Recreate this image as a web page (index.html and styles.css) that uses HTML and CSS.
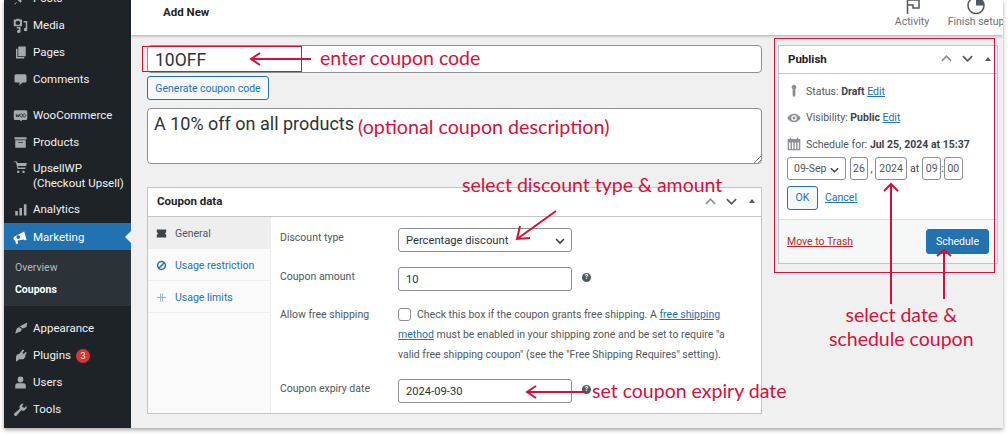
FILE: index.html
```html
<!DOCTYPE html>
<html lang="en">
<head>
<meta charset="utf-8">
<title>Add New Coupon</title>
<link rel="stylesheet" href="styles.css">
</head>
<body>
<div class="frame">
  <nav class="sidebar">
    <ul class="menu">
      <li class="item"><svg class="ic" viewBox="0 0 20 20"><path d="M12 2l6 6-2 1-2-1-3 3 .5 3L10 15.500 7 12.500 3 18l-1 0 0-1 5.500-4L4.500 10 6 8.500l3 .5 3-3-1-2z"/></svg><span>Posts</span></li>
      <li class="item"><svg class="ic" viewBox="0 0 20 20"><path d="M1 2h3l1-1h3l1 1h3v9H1zM6.500 3.500a3 3 0 1 0 .01 0zM14 4h5v11a2.300 2.300 0 1 1-2-2V6h-3zM5 12h5v5.500a2.300 2.300 0 1 1-2-2V14H5z" fill-rule="evenodd"/></svg><span>Media</span></li>
      <li class="item"><svg class="ic" viewBox="0 0 20 20"><path d="M7 2h10v13H7zM4 5h2v11h9v2H4z"/></svg><span>Pages</span></li>
      <li class="item"><svg class="ic" viewBox="0 0 20 20"><path d="M4 3h12a2 2 0 0 1 2 2v7a2 2 0 0 1-2 2h-3l-5 4 1-4H4a2 2 0 0 1-2-2V5a2 2 0 0 1 2-2z"/></svg><span>Comments</span></li>
      <li class="item gap"><svg class="ic" viewBox="0 0 20 20"><path d="M3 3h14a2 2 0 0 1 2 2v9a2 2 0 0 1-2 2h-5l-1 2-2-2H3a2 2 0 0 1-2-2V5a2 2 0 0 1 2-2z"/><path class="cut" d="M4 8l1 4 1.200-3 1.200 3 1-4M11 8a2 2 0 1 0 .01 0zM15 8a2 2 0 1 0 .01 0z"/></svg><span>WooCommerce</span></li>
      <li class="item"><svg class="ic" viewBox="0 0 20 20"><path d="M2 3h16v3H2zM3 7h14v10H3z"/><path class="cut" d="M7 10h6"/></svg><span>Products</span></li>
      <li class="item tall"><svg class="ic" viewBox="0 0 20 20"><path d="M1 3h3l2 9h10l1-2H7l-.5-2h11l1-4H6L5.500 2H1zM7 14a1.700 1.700 0 1 0 .01 0zM14 14a1.700 1.700 0 1 0 .01 0z"/></svg><span>UpsellWP<br>(Checkout Upsell)</span></li>
      <li class="item"><svg class="ic" viewBox="0 0 20 20"><path d="M3 12h3.500v6H3zM8.500 8H12v10H8.500zM14.500 3H18v15h-3.500z"/></svg><span>Analytics</span></li>
      <li class="item current"><svg class="ic" viewBox="0 0 20 20"><path d="M15 2l3 11-2 1-1.500-1.500L6 14l1 4-3 .5L3 14a3 3 0 0 1-1-5.500z"/><path class="cutb" d="M7 7a2.500 2.500 0 1 0 .01 0z"/></svg><span>Marketing</span></li>
      <li class="submenu">
        <a class="sub">Overview</a>
        <a class="sub on">Coupons</a>
      </li>
      <li class="item gap2"><svg class="ic" viewBox="0 0 20 20"><path d="M19 2l-1 6-5 2-4-3zM8 8l4 3-2 3-3 1-4 2 1-4 1-3z"/></svg><span>Appearance</span></li>
      <li class="item"><svg class="ic" viewBox="0 0 20 20"><path d="M13 2l2 1-2.500 3.500 2 1.500 2.500-3 1.500 1.500-2.500 3.500 1 1-3 4H8l-3 3-1-1V12l1-3 3-1 1-1z"/></svg><span>Plugins</span><b class="badge">3</b></li>
      <li class="item"><svg class="ic" viewBox="0 0 20 20"><path d="M10 2a3.800 3.800 0 0 1 3.800 4A3.800 3.800 0 0 1 10 10a3.800 3.800 0 0 1-3.800-4A3.800 3.800 0 0 1 10 2zM6 11h8a3 3 0 0 1 3 3v4H3v-4a3 3 0 0 1 3-3z"/></svg><span>Users</span></li>
      <li class="item"><svg class="ic" viewBox="0 0 20 20"><path d="M18 5l-3 3-3-2 2-4a5 5 0 0 0-5 7L2 15a2 2 0 1 0 3 3l6-7a5 5 0 0 0 7-6z"/></svg><span>Tools</span></li>
    </ul>
  </nav>

  <div class="main">
    <header class="topbar">
      <h1 class="page-title">Add New</h1>
      <div class="top-actions">
        <div class="action"><svg class="top-ic" viewBox="0 0 20 14"><path d="M5.500 14V-2M5.500 0H17v8h-6V5H5.500" fill="none" stroke="#50575e" stroke-width="1.500"/></svg><span>Activity</span></div>
        <div class="action"><svg class="top-ic" viewBox="0 0 20 14"><circle cx="10" cy="5.500" r="8" fill="none" stroke="#50575e" stroke-width="1.500"/><path d="M10 5.500V-2.500a8 8 0 0 1 8 8z" fill="#50575e"/></svg><span>Finish setup</span></div>
      </div>
    </header>

    <div class="content">
      <section class="left-col">
        <div class="code-input">10OFF</div>
        <button class="gen">Generate coupon code</button>
        <div class="desc">A 10% off on all products
          <svg class="grip" viewBox="0 0 8 8"><path d="M8 1L1 8M8 5L5 8" stroke="#777" fill="none"/></svg>
        </div>

        <div class="box coupon-box">
          <div class="box-head">
            <h2>Coupon data</h2>
            <div class="handles">
              <svg viewBox="0 0 12 7" class="chev dim"><path d="M1 6l5-5 5 5"/></svg>
              <svg viewBox="0 0 12 7" class="chev"><path d="M1 1l5 5 5-5"/></svg>
              <i class="tri"></i>
            </div>
          </div>
          <div class="box-body">
            <ul class="tabs">
              <li class="tab active"><svg class="tab-ic" viewBox="0 0 14 12"><path d="M1 1h12v3l-1.500 2L13 8v3H1V8l1.500-2L1 4z" fill="#3c434a"/></svg>General</li>
              <li class="tab"><svg class="tab-ic" viewBox="0 0 14 14"><circle cx="7" cy="7" r="5" fill="none" stroke="#2271b1" stroke-width="2"/><path d="M3.500 10.500l7-7" stroke="#2271b1" stroke-width="2"/></svg>Usage restriction</li>
              <li class="tab"><svg class="tab-ic" viewBox="0 0 14 14"><path d="M1 7h12M5.800 2v10M8.200 2v10" stroke="#7ba7cc" fill="none"/></svg>Usage limits</li>
            </ul>
            <div class="panel">
              <div class="row"><label>Discount type</label><div class="field select">Percentage discount<svg class="caret" viewBox="0 0 12 8"><path d="M2 2l4 4 4-4"/></svg></div></div>
              <div class="row"><label>Coupon amount</label><div class="field">10</div><i class="help">?</i></div>
              <div class="row ship"><label>Allow free shipping</label>
                <p class="ship-text"><i class="check"></i>Check this box if the coupon grants free shipping. A <a>free shipping method</a> must be enabled in your shipping zone and be set to require "a valid free shipping coupon" (see the "Free Shipping Requires" setting).</p>
              </div>
              <div class="row"><label>Coupon expiry date</label><div class="field">2024-09-30</div><i class="help">?</i></div>
            </div>
          </div>
        </div>
      </section>

      <aside class="right-col">
        <div class="box publish">
          <div class="box-head pub-head">
            <h2>Publish</h2>
            <div class="handles">
              <svg viewBox="0 0 12 7" class="chev dim"><path d="M1 6l5-5 5 5"/></svg>
              <svg viewBox="0 0 12 7" class="chev"><path d="M1 1l5 5 5-5"/></svg>
              <i class="tri"></i>
            </div>
          </div>
          <div class="pub-body">
            <div class="pub-line"><svg class="pub-ic" viewBox="0 0 20 20"><path d="M10 1a3.500 3.500 0 0 1 2 6.300V16l-2 3-2-3V7.300A3.500 3.500 0 0 1 10 1z"/></svg><span>Status: <b>Draft</b> <a>Edit</a></span></div>
            <div class="pub-line"><svg class="pub-ic" viewBox="0 0 20 20"><path d="M10 4c4 0 7.500 2.500 9.500 6-2 3.500-5.500 6-9.500 6S2.500 13.500.5 10C2.500 6.500 6 4 10 4zm0 2a4 4 0 1 0 .01 0zm0 2a2 2 0 1 1-.01 0z" fill-rule="evenodd"/></svg><span>Visibility: <b>Public</b> <a>Edit</a></span></div>
            <div class="pub-line"><svg class="pub-ic" viewBox="0 0 20 20"><path d="M1 3h3V1h2v2h8V1h2v2h3v16H1zm2 5v9h2V8zm4 0v9h2V8zm4 0v9h2V8zm4 0v9h2V8z" fill-rule="evenodd"/></svg><span>Schedule for: <b>Jul 25, 2024 at 15:37</b></span></div>
            <div class="date-row">
              <div class="df month">09-Sep<svg class="caret" viewBox="0 0 12 8"><path d="M2 2l4 4 4-4"/></svg></div>
              <div class="df day">26</div><span class="sep-comma">,</span>
              <div class="df year">2024</div><span class="sep-at">at</span>
              <div class="df hh">09</div><span class="sep-colon">:</span>
              <div class="df hh">00</div>
            </div>
            <div class="ok-row"><button class="ok">OK</button><a>Cancel</a></div>
          </div>
          <div class="pub-foot"><a class="trash">Move to Trash</a><button class="sched">Schedule</button></div>
        </div>
      </aside>
    </div>
  </div>
</div>

<div class="notes">
  <svg class="note-lines" viewBox="0 0 1008 436">
    <g fill="none" stroke="#d5103c" stroke-width="2">
      <rect class="thin" x="142.500" y="46.500" width="159" height="25"/>
      <rect class="thin" x="774.500" y="38.500" width="220" height="234"/>
      <path d="M311 59H251M260 53l-9 6 9 6"/>
      <path d="M556 211l-39 28M520 226l-3 13 13-1"/>
      <path d="M586 392H527M536 386l-9 6 9 6"/>
      <path d="M891 304V184M884 191l7-7 7 7"/>
      <path d="M944 299V250M937 256l7-6 7 6"/>
    </g>
  </svg>
  <span class="note n-code">enter coupon code</span>
  <span class="note n-desc">(optional coupon description)</span>
  <span class="note n-type">select discount type &amp; amount</span>
  <span class="note n-exp">set coupon expiry date</span>
  <span class="note n-sched">select date &amp;<br>schedule coupon</span>
</div>
</body>
</html>
```

FILE: styles.css
```css
* { box-sizing: border-box; }
html, body { margin: 0; padding: 0; }
body {
  width: 1008px;
  height: 436px;
  overflow: hidden;
  background: #fff;
  position: relative;
  font-family: Roboto, "Noto Sans", sans-serif;
  color: #3c434a;
  font-size: 11px;
}
a { color: #2271b1; text-decoration: underline; }
ul { list-style: none; margin: 0; padding: 0; }
h1, h2, p { margin: 0; }
svg { display: block; }

.frame {
  display: flex;
  width: 999px;
  height: 428px;
  margin-left: 4px;
  box-shadow: 0 2px 4px rgba(0,0,0,.35);
  background: #f0f0f1;
  overflow: hidden;
}

/* sidebar */
.sidebar { width: 127px; flex: none; background: #1d2327; overflow: hidden; }
.menu { margin-top: -15px; }
.item {
  height: 27px;
  display: flex;
  align-items: center;
  color: #f0f0f1;
  font-size: 11.500px;
  line-height: 15px;
  padding-left: 9px;
  gap: 5px;
  position: relative;
}
.ic { width: 15px; height: 15px; flex: none; fill: #a7aaad; }
.cut { fill: none; stroke: #1d2327; stroke-width: 1; }
.cutb { fill: #2271b1; }
.item.gap { margin-top: 9px; }
.item.tall { height: 40px; align-items: flex-start; padding-top: 5px; }
.item.tall .ic { margin-top: -1px; }
.item.current { background: #2271b1; color: #fff; padding-top: 2px; }
.item.current .ic { fill: #fff; }
.item.current::after {
  content: "";
  position: absolute;
  right: 0;
  top: 8px;
  border: 6px solid transparent;
  border-right-color: #f0f0f1;
  border-left: 0;
}
.submenu { background: #2c3338; height: 56px; padding-top: 8px; display: flex; flex-direction: column; }
.sub { display: block; height: 22px; line-height: 20px; padding-left: 11px; color: #b4b9be; font-size: 10.500px; text-decoration: none; }
.sub.on { color: #fff; font-weight: 700; }
.item.gap2 { margin-top: 9px; }
.badge {
  width: 14px; height: 14px; border-radius: 50%;
  background: #d63638; color: #fff;
  font-size: 9px; line-height: 14px; text-align: center; font-weight: 400;
}

/* main */
.main { flex: 1; display: flex; flex-direction: column; min-width: 0; }
.topbar {
  height: 35px;
  flex: none;
  background: #fff;
  box-shadow: 0 1px 3px rgba(0,0,0,.3);
  display: flex;
  justify-content: space-between;
  position: relative;
  padding-left: 32px;
}
.page-title { font-size: 11.500px; font-weight: 700; color: #1d2327; line-height: 24px; }
.top-actions { display: flex; gap: 10px; height: 35px; overflow: hidden; }
.action { display: flex; flex-direction: column; align-items: center; font-size: 10.500px; color: #6b7075; width: 54px; }
.action span { line-height: 13px; margin-top: 1px; white-space: nowrap; }
.top-ic { width: 20px; height: 14px; flex: none; }

.content { flex: 1; display: flex; padding: 10px 5px 0 16px; gap: 16px; min-height: 0; }
.left-col { width: 615px; flex: none; }
.right-col { width: 220px; flex: none; }

.code-input {
  height: 28px;
  background: #fff;
  border: 1px solid #8c8f94;
  border-radius: 4px;
  font-size: 17.500px;
  line-height: 29px;
  padding-left: 7px;
  color: #2c3338;
}
.gen {
  display: block;
  margin-top: 3px;
  height: 24px;
  width: 122px;
  padding: 0;
  border: 1px solid #2271b1;
  border-radius: 3px;
  background: #f6f7f7;
  color: #2271b1;
  font: 10.500px Roboto, sans-serif;
}
.desc {
  position: relative;
  margin-top: 8px;
  height: 56px;
  background: #fff;
  border: 1px solid #8c8f94;
  border-radius: 4px;
  font-size: 18px;
  line-height: 24px;
  padding: 3px 6px;
  color: #2c3338;
}
.grip { position: absolute; right: 0; bottom: 0; width: 8px; height: 8px; }

.box { background: #fff; border: 1px solid #c3c4c7; }
.coupon-box { margin-top: 23px; height: 227px; display: flex; flex-direction: column; }
.box-head {
  height: 29px;
  flex: none;
  border-bottom: 1px solid #c3c4c7;
  display: flex;
  align-items: center;
  justify-content: space-between;
  padding: 0 6px 2px 9px;
}
.box-head h2 { font-size: 11.500px; font-weight: 700; color: #1d2327; }
.handles { display: flex; align-items: center; gap: 10px; }
.chev { width: 11px; height: 7px; fill: none; stroke: #50575e; stroke-width: 1.800; }
.chev.dim { stroke: #8c8f94; }
.tri { width: 0; height: 0; border: 3px solid transparent; border-top: 0; border-bottom: 4px solid #50575e; margin-left: 2px; }

.box-body { flex: 1; display: flex; min-height: 0; }
.tabs { width: 123px; flex: none; background: #fafafa; border-right: 1px solid #eee; }
.tab {
  height: 32px;
  display: flex;
  align-items: center;
  padding: 2px 0 0 8px;
  gap: 8px;
  color: #2271b1;
  font-size: 10.500px;
  border-bottom: 1px solid #eee;
  background: #fafafa;
}
.tab.active { background: #eee; color: #50575e; border-bottom: 0; padding-top: 0; }
.tab-ic { width: 11px; height: 11px; flex: none; }

.panel { flex: 1; padding: 11px 0 0 9px; min-width: 0; }
.row { display: flex; align-items: center; height: 24px; margin-bottom: 15px; position: relative; }
.row label { width: 118px; flex: none; color: #50575e; font-size: 10.500px; margin-top: -6px; }
.field {
  width: 174px;
  height: 24px;
  border: 1px solid #8c8f94;
  border-radius: 3px;
  background: #fff;
  padding-left: 7px;
  line-height: 23px;
  font-size: 11.200px;
  color: #2c3338;
  position: relative;
}
.caret { width: 12px; height: 8px; fill: none; stroke: #3c434a; stroke-width: 1.600; }
.select .caret { position: absolute; right: 5px; top: 8px; }
.help {
  width: 9px; height: 9px; border-radius: 50%;
  background: #50575e; color: #fff;
  font: 700 7px/9px Roboto, sans-serif;
  text-align: center;
  margin-left: 10px;
  margin-top: -4px;
}
.ship { height: 60px; align-items: flex-start; margin-bottom: 13px; margin-top: 2px; }
.ship label { margin-top: 1px; line-height: 15px; }
.ship-text { width: 330px; font-size: 10.500px; line-height: 20px; color: #50575e; margin-top: -1px; }
.check {
  display: inline-block;
  width: 13px; height: 13px;
  border: 1px solid #8c8f94; border-radius: 3px;
  background: #fff;
  vertical-align: -3px;
  margin-right: 6px;
}

/* publish */
.publish { height: 219px; display: flex; flex-direction: column; }
.pub-head { height: 28px; }
.pub-body { flex: 1; padding: 4px 8px 0 8px; }
.pub-line { height: 26.500px; display: flex; align-items: center; gap: 5px; font-size: 10.500px; color: #50575e; }
.pub-line b { color: #3c434a; }
.pub-ic { width: 14px; height: 14px; fill: #8c8f94; flex: none; }
.date-row { display: flex; align-items: center; gap: 2px; font-size: 10.500px; height: 24px; margin-top: -1px; }
.sep-comma { margin: 0 .5px; }
.sep-at { margin: 0 1px; }
.sep-colon { margin: 0 -2px; }
.df {
  height: 23px;
  border: 1px solid #8c8f94;
  border-radius: 3px;
  background: #fff;
  line-height: 22px;
  text-align: center;
  font-size: 10.500px;
  color: #50575e;
}
.month { width: 59px; margin-right: 2px; text-align: left; padding-left: 6px; position: relative; }
.month .caret { position: absolute; right: 5px; top: 8px; width: 11px; }
.day { width: 18px; }
.year { width: 32px; }
.hh { width: 19px; }
.ok-row { display: flex; align-items: center; gap: 7px; margin-top: 5px; font-size: 10.500px; }
.ok {
  width: 31px; height: 24px; padding: 0;
  border: 1px solid #2271b1; border-radius: 3px;
  background: #f6f7f7; color: #2271b1;
  font: 10.500px Roboto, sans-serif;
}
.pub-foot {
  height: 44px;
  flex: none;
  background: #f6f7f7;
  border-top: 1px solid #dcdcde;
  display: flex;
  align-items: center;
  justify-content: space-between;
  padding: 0 8px;
}
.trash { color: #b32d2e; font-size: 10.500px; }
.sched {
  width: 63px; height: 25px; padding: 0;
  border: 1px solid #2271b1; border-radius: 3px;
  background: #2271b1; color: #fff;
  font: 10.500px Roboto, sans-serif;
}

/* annotations */
.notes { position: absolute; left: 0; top: 0; width: 1008px; height: 436px; pointer-events: none; }
.note-lines { position: absolute; left: 0; top: 0; width: 1008px; height: 436px; }
.thin { stroke-width: 1; }
.note { position: absolute; font-family: Lato, sans-serif; font-size: 19.500px; line-height: 24px; color: #d5103c; white-space: nowrap; }
.n-code { left: 320px; top: 46px; }
.n-desc { left: 358px; top: 115px; font-size: 19.700px; }
.n-type { left: 462px; top: 173px; }
.n-exp { left: 592px; top: 379px; }
.n-sched { left: 829px; top: 303px; text-align: center; }
```
